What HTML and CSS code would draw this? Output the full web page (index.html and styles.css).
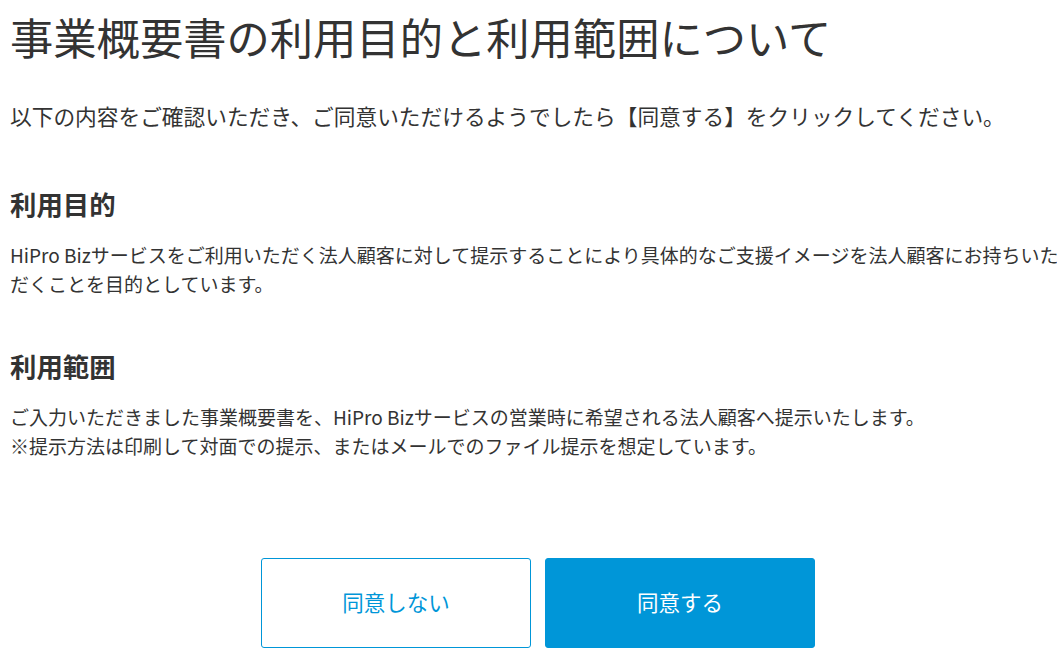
FILE: index.html
```html
<!DOCTYPE html>
<html lang="ja">
<head>
<meta charset="utf-8">
<title>事業概要書の利用目的と利用範囲について</title>
<link rel="stylesheet" href="styles.css">
</head>
<body>
<main class="page">
  <h1 class="title">事業概要書の利用目的と利用範囲について</h1>
  <p class="intro">以下の内容をご確認いただき、ご同意いただけるようでしたら【同意する】をクリックしてください。</p>
  <section class="section">
    <h2 class="heading">利用目的</h2>
    <p class="body">HiPro Bizサービスをご利用いただく法人顧客に対して提示することにより具体的なご支援イメージを法人顧客にお持ちいただくことを目的としています。</p>
  </section>
  <section class="section">
    <h2 class="heading">利用範囲</h2>
    <p class="body">ご入力いただきました事業概要書を、HiPro Bizサービスの営業時に希望される法人顧客へ提示いたします。<br>※提示方法は印刷して対面での提示、またはメールでのファイル提示を想定しています。</p>
  </section>
  <div class="actions">
    <button class="btn btn-outline" type="button">同意しない</button>
    <button class="btn btn-primary" type="button">同意する</button>
  </div>
</main>
</body>
</html>
```
FILE: styles.css
```css
* { box-sizing: border-box; }
html, body { margin: 0; padding: 0; background: #fff; }
body {
  font-family: "Noto Sans CJK JP", "Noto Sans", sans-serif;
  color: #333;
  width: 1057px;
  overflow: hidden;
}
.page {
  padding: 0 0 0 10px;
  width: 1066px;
}
.title {
  margin: 0;
  padding-top: 8px;
  font-size: 43.3px;
  font-weight: 400;
  line-height: 56px;
}
.intro {
  margin: 36px 0 0;
  font-size: 21.7px;
  line-height: 32px;
}
.section { margin-top: 54px; }
.section + .section { margin-top: 50px; }
.heading {
  margin: 0;
  font-size: 26.4px;
  font-weight: 700;
  line-height: 36px;
}
.body {
  margin: 19px 0 0;
  font-size: 19px;
  line-height: 28.5px;
  width: 1050px;
}
.actions {
  display: flex;
  justify-content: center;
  gap: 14px;
  margin-top: 98px;
}
.btn {
  width: 270px;
  height: 90px;
  padding: 0 0 4px;
  border-radius: 3px;
  font-family: inherit;
  font-size: 21.5px;
  cursor: pointer;
}
.btn-outline {
  background: #fff;
  border: 1px solid #0096d8;
  color: #0096d8;
}
.btn-primary {
  background: #0096d8;
  border: 1px solid #0096d8;
  color: #fff;
}
```
